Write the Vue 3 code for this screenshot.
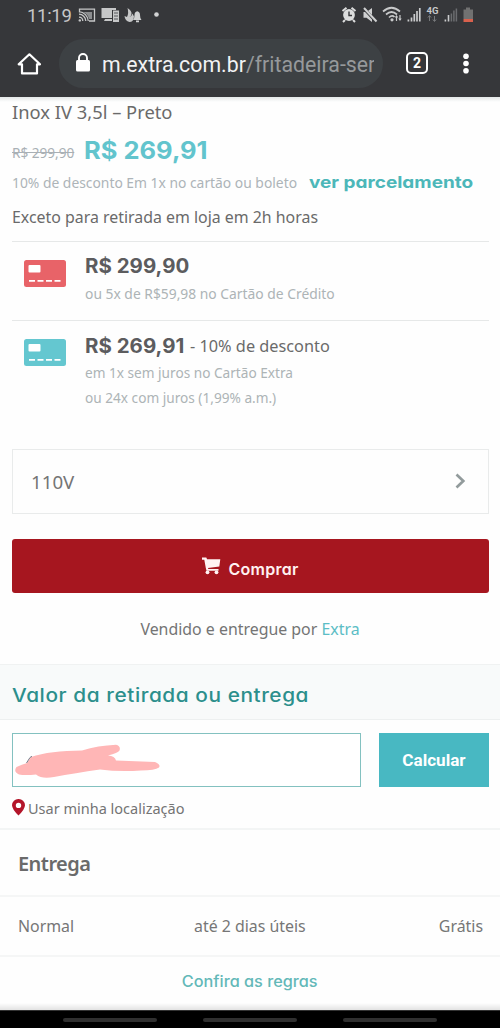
<script setup>
const offers = [
  { tone: 'red', price: 'R$ 299,90', note: '', lines: ['ou 5x de R$59,98 no Cartão de Crédito'] },
  { tone: 'teal', price: 'R$ 269,91', note: '- 10% de desconto', lines: ['em 1x sem juros no Cartão Extra', 'ou 24x com juros (1,99% a.m.)'] },
]
</script>

<template>
  <div class="phone">
    <header class="chrome">
      <div class="status">
        <span class="clock">11:19</span>
        <svg class="left-icons" width="88" height="20" viewBox="78 5 88 20">
          <path d="M83 12h9v7h-3q-1-5-6-7z" fill="#8b8d8f" />
          <g fill="none" stroke="#c6c7c8" stroke-width="1.3">
            <path d="M79.500 12.500V9.200H94.500V21H89M79 14.200a7 7 0 0 1 6.800 6.800M79 17.200a4 4 0 0 1 3.800 3.800M79 11.700a10 10 0 0 1 9.300 9.300" />
          </g>
          <circle cx="79.800" cy="20.400" r="1.200" fill="#c6c7c8" />
          <path d="M101.500 8h14.500v2h-4v8h-10.500zM105 19h7v2h-8z" fill="#c6c7c8" />
          <path d="M113 10.500h6v11.500h-6z" fill="#c6c7c8" />
          <path d="M114 13h4M114 16h4M114 19h4" stroke="#55575a" />
          <path d="M127.500 8q4.500 3 4 6t-3 3q3 0 4-3.500l1.500 3q-.5 5.500-4.500 5.500-4.500-1-5-6l2.500 1q2-4 .5-9z" fill="#c6c7c8" />
          <path d="M133 20q1.500-1.500 1.500-5 0-3 2.700-3.700 2.800.7 2.800 3.700 0 3.500 1.500 5zM136 20.500h3v1.700h-3z" fill="#d0d1d2" />
          <circle cx="156.500" cy="14.500" r="2.300" fill="#d2d3d4" />
        </svg>
        <svg class="right-icons" width="140" height="22" viewBox="338 4 140 22">
          <circle cx="349" cy="15" r="5.900" fill="#dcdddd" />
          <path d="M342.500 11l4-3.200M351.500 7.800l4 3.200M345 20l-2 2M353 20l2 2" stroke="#dcdddd" stroke-width="2" />
          <path d="M349 11.500V15.500h3" fill="none" stroke="#37383b" stroke-width="1.400" />
          <path d="M363.500 12h3l5.500-4v14l-5.500-4.300h-3z" fill="#cfd0d1" />
          <path d="M363 7.500L376 21.500" stroke="#37383b" stroke-width="3.200" />
          <path d="M364 8L376.500 21.500" stroke="#cfd0d1" stroke-width="2" />
          <g fill="none" stroke="#c8c9ca" stroke-width="1.700">
            <path d="M383 11.500q8.500-7.500 17 0M386 14.500q5.500-5 11 0M389 17.500q3-3 5.500-.5" />
          </g>
          <circle cx="392" cy="19.800" r="1.600" fill="#c8c9ca" />
          <path d="M396.500 21v-5M400 15v5" stroke="#c8c9ca" stroke-width="1.200" />
          <path d="M394.800 17.500l1.700-2.500 1.700 2.500zM398.300 18.500l1.700 2.500 1.700-2.500z" fill="#c8c9ca" />
          <g stroke="#cacbcc" stroke-width="1.700">
            <path d="M408.400 19.500v2M411.500 17.500v4M414.300 14v7.500M417 11v10.500M419.800 8v13.500" />
          </g>
          <text x="426.500" y="13.500" class="net">4G</text>
          <path d="M429.500 21v-5M434.500 16v5M427.900 17.500l1.600-2 1.600 2M432.900 19.500l1.600 2 1.600-2" fill="none" stroke="#77797b" />
          <path d="M445.400 19.500v2M448.500 15v6.500" stroke="#cacbcc" stroke-width="1.600" />
          <path d="M451.400 13.500v8M453.900 10.500v11M456.400 8.500v13" stroke="#6b6d70" stroke-width="1.500" />
          <path d="M463.500 9.500h2.500v-2h4v2h3V19h-9.500z" fill="#717171" />
          <path d="M463.500 19h9.500v3h-9.500z" fill="#d9614d" />
        </svg>
      </div>
      <div class="toolbar">
        <svg class="home" width="24" height="24" viewBox="0 0 24 24">
          <path d="M1.700 12.300L12.400 2.300 23 12.300H20V21.400H5V12.300z" fill="none" stroke="#fff" stroke-width="2.200" stroke-linejoin="round" />
        </svg>
        <div class="address">
          <svg width="14" height="20" viewBox="0 0 14 20">
            <path d="M3 8V5a4 4 0 0 1 8 0v3" fill="none" stroke="#fff" stroke-width="1.900" />
            <rect x="0" y="7" width="14" height="11.500" rx="1.500" fill="#fff" />
          </svg>
          <span class="url">m.extra.com.br<i>/fritadeira-ser</i></span>
        </div>
        <span class="tabs">2</span>
        <svg class="dots" width="6" height="22" viewBox="0 0 6 22" fill="#fff">
          <circle cx="3" cy="3.300" r="2.800" /><circle cx="3" cy="10.500" r="2.800" /><circle cx="3" cy="17.700" r="2.800" />
        </svg>
      </div>
    </header>

    <main>
      <section class="product">
        <h1>Inox IV 3,5l – Preto</h1>
        <div class="price-row">
          <s>R$ 299,90</s><strong>R$ 269,91</strong>
        </div>
        <div class="discount">
          <span>10% de desconto Em 1x no cartão ou boleto</span>
          <a>ver parcelamento</a>
        </div>
        <p class="except">Exceto para retirada em loja em 2h horas</p>
      </section>

      <section v-for="o in offers" :key="o.tone" class="offer" :class="o.tone">
        <svg class="card" width="42" height="27" viewBox="0 0 42 27">
          <rect width="42" height="27" rx="2.500" class="plate" />
          <rect x="4.500" y="5" width="12" height="7.500" rx="1" fill="#fff" />
          <path d="M5 20.800h6M13.500 20.800h6M22 20.800h6M30.500 20.800h6" stroke="#fff" stroke-width="1.700" />
        </svg>
        <div class="offer-text">
          <div class="offer-head"><b>{{ o.price }}</b><span v-if="o.note">{{ o.note }}</span></div>
          <div v-for="l in o.lines" :key="l" class="offer-line">{{ l }}</div>
        </div>
      </section>

      <div class="voltage">
        <span>110V</span>
        <svg width="11" height="16" viewBox="0 0 11 16"><path d="M1.500 1.500L8.300 8 1.500 14.500" fill="none" stroke="#929b9c" stroke-width="2.700" /></svg>
      </div>

      <button class="buy">
        <svg width="19" height="18" viewBox="0 0 19 18" fill="#fff3f3">
          <path d="M0 .5h4.300l.8 1.700H18.300L17.300 9.500 6 11l.3 1H16.500V13.700H4.500L3.800 11 2.300 2.800H0z" />
          <circle cx="5.500" cy="15.300" r="1.900" /><circle cx="14.500" cy="15.300" r="1.900" />
        </svg>
        <span>Comprar</span>
      </button>

      <p class="seller">Vendido e entregue por <a>Extra</a></p>

      <h2><span>Valor da retirada ou entrega</span></h2>

      <form class="zip">
        <div class="field">
          <svg width="150" height="38" viewBox="14 742 150 38">
            <path d="M16.500 767Q22 764.500 27 763L31 757Q50 750.500 82 750.500Q98 745.500 116 744.700Q121 746 119.500 750.500Q118 753 108 755.500Q115 756 116 760.500L155 762Q161 764.500 159 767.500Q155 770.500 141 770.500Q119 772 100 769.500Q75 773 54 777Q42 779.500 36 774.500Q25 775.500 19 774.500Q13 772 16.500 767Z" fill="#ffb6b6" />
            <path d="M26.500 763l3.500-5.500 2-1.200" fill="none" stroke="#777b88" stroke-width="1" />
          </svg>
        </div>
        <button type="button">Calcular</button>
      </form>

      <div class="locate">
        <svg width="13" height="17" viewBox="0 0 13 17"><path fill-rule="evenodd" d="M6.500 0A6.400 6.400 0 0 1 13 6.300Q12.800 10.500 6.500 16.500 .2 10.500 0 6.300A6.400 6.400 0 0 1 6.500 0zM6.500 3.700a2.700 2.700 0 1 0 0 5.400 2.700 2.700 0 0 0 0-5.400z" fill="#b3152a" /></svg>
        <span>Usar minha localização</span>
      </div>

      <h3>Entrega</h3>
      <div class="delivery">
        <span>Normal</span><span>até 2 dias úteis</span><span>Grátis</span>
      </div>
      <div class="rules"><a>Confira as regras</a></div>
    </main>

    <nav><i /><i /><i /></nav>
  </div>
</template>

<style>
body { background: #fdfdfd; }
</style>

<style scoped>
* { box-sizing: border-box; }
.phone { width: 500px; height: 1028px; overflow: hidden; background: #fefefe; color: #6a6a6a; font-family: "Noto Sans", sans-serif; display: flex; flex-direction: column; white-space: nowrap; }
h1, h2, h3, p { margin: 0; font-weight: 400; }
button { border: 0; padding: 0; }
.chrome { height: 97px; background: #36373a; color: #fff; font-family: Roboto, sans-serif; }
.status { height: 30px; display: flex; align-items: center; padding-left: 27px; }
.clock { font-size: 18.5px; color: #c6c7c8; width: 51px; letter-spacing: -.3px; padding-top: 1px; }
.left-icons { flex: none; }
.right-icons { margin-left: 172px; flex: none; }
.net { font: 700 9.500px Roboto, sans-serif; fill: #c8c9ca; }
.toolbar { height: 67px; display: flex; align-items: center; padding: 0 0 0 17px; }
.address { margin-left: 18px; width: 324px; height: 49px; border-radius: 25px; background: #3d4144; display: flex; align-items: center; padding-left: 17px; }
.address svg { flex: none; margin-top: -1px; }
.url { margin-left: 12px; width: 272px; overflow: hidden; font-size: 21.300px; color: #f1f2f3; padding-top: 1px; }
.url i { font-style: normal; color: #96999b; }
.tabs { margin-left: 23px; width: 22px; height: 22px; border: 2px solid #fff; border-radius: 5px; display: flex; align-items: center; justify-content: center; font-size: 14px; font-weight: 700; margin-top: -1px; }
.dots { margin-left: 35px; }

main { height: 913px; background: linear-gradient(#e4e8e8, #fefefe 5px); }
.product { margin: 0 11px 0 12px; height: 145px; border-bottom: 1px solid #e6e8e8; }
h1 { height: 31px; line-height: 29px; font-size: 18.350px; }
.price-row { height: 43px; display: flex; align-items: center; }
.price-row s { font-size: 13.600px; color: #a9b0b5; margin-top: 6px; width: 72px; }
.price-row strong { margin-top: 2px; font: 700 24px Inter, sans-serif; color: #62c4cd; transform: scaleX(1.062); transform-origin: left; }
.discount { height: 23px; display: flex; align-items: center; font-size: 13.850px; color: #adb4b8; padding-bottom: 1px; }
.discount span { width: 297px; }
.discount a { margin-top: -1px; font: 700 16.500px Inter, sans-serif; font-feature-settings: "cv11"; color: #4cb7b9; transform: scaleX(1.15); transform-origin: left; }
.except { height: 46px; line-height: 47px; font-size: 15.900px; }

.offer { margin: 0 11px 0 12px; display: flex; padding-left: 12px; }
.offer.red { height: 79px; border-bottom: 1px solid #e6e8e8; }
.offer.teal { height: 128px; }
.card { margin-top: 18px; flex: none; }
.red .plate { fill: #e86368; }
.teal .plate { fill: #64c7d0; }
.offer-text { margin-left: 19px; padding-top: 9px; }
.offer-head { height: 30px; display: flex; align-items: center; }
.teal .offer-head { padding-top: 1px; }
.offer-head b { width: 105px; font: 700 19.500px Inter, sans-serif; color: #5c5c5e; transform: scaleX(1.05); transform-origin: left; }
.offer-head span { font-size: 16.300px; }
.offer-line { height: 25px; line-height: 25px; font-size: 13.850px; color: #adb4b6; }
.teal .offer-line { font-size: 13.650px; }

.voltage { margin: 0 11px 0 12px; height: 65px; border: 1px solid #e9ebeb; display: flex; align-items: center; justify-content: space-between; padding: 0 22px 1px 18px; font-size: 18.700px; color: #757575; }
.voltage svg { margin-top: 0; }
.buy { margin: 25px 11px 0 12px; width: 477px; height: 54px; border-radius: 3px; background: #a6161f; color: #fff1f1; display: flex; justify-content: center; align-items: center; font: 600 16px Inter, sans-serif; font-feature-settings: "cv11"; letter-spacing: .25px; }
.buy svg { margin-top: -1px; }
.buy span { margin: 6px 0 0 7px; }
.seller { height: 71px; line-height: 73px; text-align: center; font-size: 15.900px; color: #747474; }
.seller a { color: #5bbdc5; }
h2 { height: 56px; border-top: 1px solid #f0f2f2; border-bottom: 1px solid #edf0f0; background: #f8fafa; padding-left: 12px; font: 500 18.500px/60px Inter, sans-serif; font-feature-settings: "cv11"; color: #2c8f8c; }
h2 span { display: inline-block; letter-spacing: .5px; transform: scaleX(1.125); transform-origin: left; }
.zip { margin: 13px 11px 0 12px; display: flex; justify-content: space-between; }
.field { width: 349px; height: 54px; border: 1px solid #83c1c0; padding: 8px 0 0 1px; background: #fff; }
.field svg { display: block; }
.zip button { width: 110px; height: 54px; padding-bottom: 1px; background: #48b8c2; color: #fff; font: 700 17.100px Roboto, sans-serif; }
.locate { height: 43px; border-bottom: 2px solid #f3f5f5; display: flex; align-items: center; padding: 0 0 0 12px; font-size: 14.500px; color: #747474; }
.locate svg { margin-right: 3px; }
h3 { height: 67px; line-height: 67px; padding-left: 18px; font-size: 20px; font-weight: 600; letter-spacing: -.55px; color: #6a6a6a; border-bottom: 2px solid #f5f6f6; }
.delivery { height: 60px; border-bottom: 2px solid #f5f6f6; padding: 0 17px 0 18px; display: grid; grid-template-columns: 176px 1fr auto; align-items: center; font-size: 15.900px; color: #767676; }
.rules { height: 53px; text-align: center; font: 500 15.500px/49px Inter, sans-serif; font-feature-settings: "cv11"; color: #63b8b8; background: linear-gradient(transparent 46px, #e2e2e2); }
.rules a { display: inline-block; transform: scaleX(1.05); }
nav { height: 18px; background: #000; display: flex; gap: 46px; padding: 7px 0 0 63px; border-top: 1px solid #333; }
nav i { width: 94px; height: 4px; border-radius: 2px; background: #303030; }
</style>
